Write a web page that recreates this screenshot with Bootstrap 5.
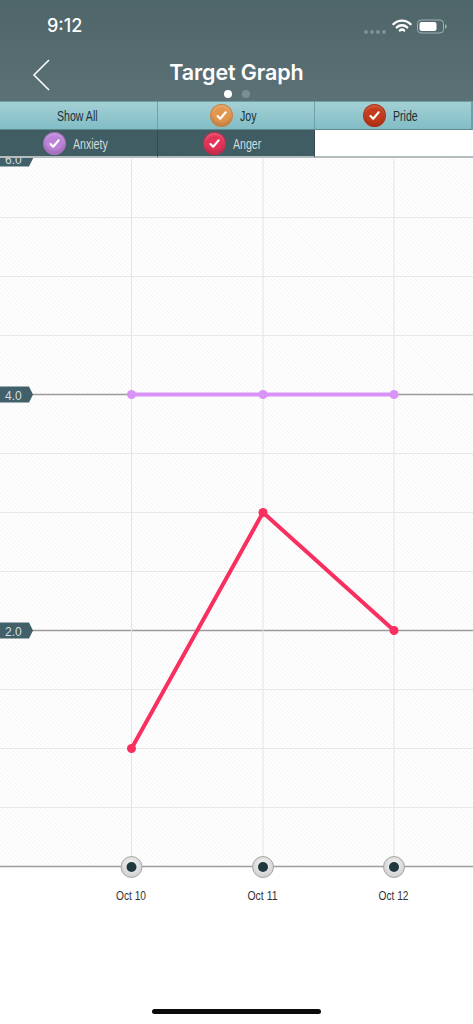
<!DOCTYPE html>
<html lang="en">
<head>
<meta charset="UTF-8">
<meta name="viewport" content="width=device-width, initial-scale=1.0">
<title>Target Graph</title>
<link href="https://cdn.jsdelivr.net/npm/bootstrap@5.3.3/dist/css/bootstrap.min.css" rel="stylesheet">
<style>
  html, body { height: 100%; }
  body { background: #fff; font-family: "Liberation Sans", Arial, sans-serif; width: 473px; height: 1024px; overflow: hidden; }
  .top-head { height: 101px; background: linear-gradient(#4e656a, #5b7175); color: #fff; }
  .status-row { height: 52px; padding: 15px 25px 0 47px; }
  .clock { font-family: Inter, "Liberation Sans", sans-serif; font-size: 18px; font-weight: 500; line-height: 22px; }
  .signal-dots { gap: 2px; margin: 11px 6px 0 0; }
  .signal-dots i { width: 4px; height: 4px; border-radius: 50%; background: #7d9196; }
  .status-icons { margin-top: 3px; }
  .wifi-icon { margin-right: 5px; }
  .title-row { height: 49px; }
  .page-title { font-family: Inter, "Liberation Sans", sans-serif; font-size: 21.5px; font-weight: 600; line-height: 1; margin: 0; padding-top: 10px; letter-spacing: -.1px; }
  .back-arrow { left: 32px; top: 59px; }
  .dots { left: 223.5px; top: 90px; gap: 10.5px; }
  .dots i { width: 8px; height: 8px; border-radius: 50%; background: #7b8f93; }
  .dots i.on { background: #fff; }
  .filter-row { display: grid; grid-template-columns: 158px 157px 158px; }
  .filter-row.one { height: 29px; }
  .filter-row.two { height: 28px; }
  .filter-cell { display: flex; align-items: center; gap: 7px; font-size: 14.5px; font-weight: 400; }
  .lbl { display: inline-block; transform: scaleX(.73); transform-origin: left center; white-space: nowrap; padding-top: 3px; }
  .one .filter-cell { background: linear-gradient(#a3d0d5, #82bdc6); color: #1f2f33; border: 1px solid #6f9fa6; border-left: 0; border-bottom-color: #5f888e; }
  .one .filter-cell:last-child { border-right: 2px solid #6f9fa6; }
  .two .filter-cell { background: #3f5d63; color: #d2dcde; border-right: 1px solid #35494e; border-bottom: 2px solid #b5bcbd; }
  .two .filter-cell.blank { background: #fff; border-right: 0; }
  .cell-all { padding-left: 57px; }
  .cell-joy { padding-left: 52px; }
  .cell-pride { padding-left: 48px; }
  .cell-anx { padding-left: 43px; }
  .cell-ang { padding-left: 45px; }
  .check-dot { width: 23px; height: 23px; flex: none; border-radius: 50%; display: flex; align-items: center; justify-content: center; border: 1px solid rgba(0, 0, 0, .12); box-shadow: inset 0 -3px 3px rgba(0, 0, 0, .14), inset 0 2px 2px rgba(255, 255, 255, .18); }
  .c-joy { background: #e2974f; }
  .c-pride { background: #c43a1a; }
  .c-anx { background: #bd83d8; }
  .c-ang { background: #e23458; }
  .chart-wrap { height: 760px; overflow: hidden; }
  .chart-wrap svg { display: block; }
  .axis-txt { font-family: "Liberation Sans", Arial, sans-serif; font-size: 12px; fill: #d5dfe0; }
  .date-txt { font-family: "Liberation Sans", Arial, sans-serif; font-size: 13px; fill: #333; }
  .home-bar { left: 152px; top: 1009px; width: 169px; height: 5px; border-radius: 3px; background: #0b0b0b; }
</style>
</head>
<body class="position-relative">

<div class="top-head position-relative">
  <div class="status-row d-flex align-items-start justify-content-between">
    <span class="clock">9:12</span>
    <div class="status-icons d-flex align-items-center">
      <div class="signal-dots d-flex"><i></i><i></i><i></i><i></i></div>
      <svg width="20" height="16" viewBox="0 0 20 16" class="wifi-icon" fill="none" stroke="#fff" stroke-linecap="round">
        <path d="M1.5 6.2a12 12 0 0 1 17 0" stroke-width="2.4"/>
        <path d="M4.8 9.4a7.4 7.4 0 0 1 10.4 0" stroke-width="2.4"/>
        <path d="M8 12.4a3 3 0 0 1 4 0" stroke-width="2.6"/>
      </svg>
      <svg width="31" height="15" viewBox="0 0 31 15">
        <rect x=".5" y="1" width="26" height="13" rx="3.5" fill="none" stroke="#9fb0b3"/>
        <rect x="2.5" y="3" width="17" height="9" rx="2" fill="#fff"/>
        <rect x="28" y="5.500" width="1.500" height="4" rx=".7" fill="#9fb0b3"/>
      </svg>
    </div>
  </div>
  <div class="title-row text-center">
    <h1 class="page-title">Target Graph</h1>
  </div>
  <svg class="back-arrow position-absolute" width="20" height="32" viewBox="0 0 20 32" fill="none" stroke="#fff" stroke-width="1.5">
    <path d="M17 1 2 16l15 15"/>
  </svg>
  <div class="dots position-absolute d-flex"><i class="on"></i><i></i></div>
</div>

<div class="filter-row one">
  <div class="filter-cell cell-all"><span class="lbl">Show All</span></div>
  <div class="filter-cell cell-joy">
    <span class="check-dot c-joy"><svg width="13" height="11" viewBox="0 0 13 11" fill="none" stroke="#fff" stroke-width="2.1" stroke-linecap="round" stroke-linejoin="round"><path d="m2.500 6 2.700 2.700 5.500-6.400"/></svg></span><span class="lbl">Joy</span>
  </div>
  <div class="filter-cell cell-pride">
    <span class="check-dot c-pride"><svg width="13" height="11" viewBox="0 0 13 11" fill="none" stroke="#fff" stroke-width="2.1" stroke-linecap="round" stroke-linejoin="round"><path d="m2.500 6 2.700 2.700 5.500-6.400"/></svg></span><span class="lbl">Pride</span>
  </div>
</div>
<div class="filter-row two">
  <div class="filter-cell cell-anx">
    <span class="check-dot c-anx"><svg width="13" height="11" viewBox="0 0 13 11" fill="none" stroke="#fff" stroke-width="2.1" stroke-linecap="round" stroke-linejoin="round"><path d="m2.500 6 2.700 2.700 5.500-6.400"/></svg></span><span class="lbl">Anxiety</span>
  </div>
  <div class="filter-cell cell-ang">
    <span class="check-dot c-ang"><svg width="13" height="11" viewBox="0 0 13 11" fill="none" stroke="#fff" stroke-width="2.1" stroke-linecap="round" stroke-linejoin="round"><path d="m2.500 6 2.700 2.700 5.500-6.400"/></svg></span><span class="lbl">Anger</span>
  </div>
  <div class="filter-cell blank"></div>
</div>

<div class="chart-wrap">
  <svg id="chart" width="473" height="760" viewBox="0 157.500 473 760">
    <defs>
      <pattern id="hatch" width="3" height="3" patternUnits="userSpaceOnUse" patternTransform="rotate(-45)">
        <rect width="3" height="3" fill="#fff"/>
        <rect width="1" height="3" fill="#f6f6f6"/>
      </pattern>
      <radialGradient id="knob" cx=".5" cy=".4" r=".6">
        <stop offset="0" stop-color="#f9f9f9"/>
        <stop offset="1" stop-color="#cdcdcd"/>
      </radialGradient>
    </defs>
    <rect x="0" y="157.500" width="473" height="708.500" fill="url(#hatch)"/>
    <g id="gridlines"></g>
    <polyline points="131,394 263,394 394,394" fill="none" stroke="#d993f7" stroke-width="4"/>
    <polyline points="131.500,748 263,512 394,630" fill="none" stroke="#f9305f" stroke-width="4" stroke-linejoin="round"/>
    <g fill="#d993f7"><circle cx="131.500" cy="394" r="4.500"/><circle cx="263" cy="394" r="4.500"/><circle cx="394" cy="394" r="4.500"/></g>
    <g fill="#f9305f"><circle cx="131.500" cy="748" r="4.500"/><circle cx="263" cy="512" r="4.500"/><circle cx="394" cy="630" r="4.500"/></g>
    <g id="axis-tags"></g>
    <g id="x-axis"></g>
  </svg>
</div>

<div class="home-bar position-absolute"></div>

<script src="https://cdn.jsdelivr.net/npm/bootstrap@5.3.3/dist/js/bootstrap.bundle.min.js"></script>
<script>
  const ns = "http://www.w3.org/2000/svg";
  function add(parent, name, attrs, text) {
    const el = document.createElementNS(ns, name);
    for (const k in attrs) el.setAttribute(k, attrs[k]);
    if (text) el.textContent = text;
    document.getElementById(parent).appendChild(el);
  }

  const xs = [131.5, 263, 394];

  // horizontal lines, every 59px. 2.0 and 4.0 are the dark ones
  for (let i = 1; i <= 12; i++) {
    const y = 158 + i * 59;
    const dark = i === 4 || i === 8 || i === 12;
    add("gridlines", "line", { x1: 0, x2: 473, y1: y, y2: y, stroke: dark ? "#9c9c9c" : "#e8e8e8", "stroke-width": dark ? 1.5 : 1 });
  }
  xs.forEach(x => add("gridlines", "line", { x1: x, x2: x, y1: 158, y2: 866, stroke: "#e3e3e3", "stroke-width": 1 }));

  [[158, "6.0"], [394, "4.0"], [630, "2.0"]].forEach(([y, label]) => {
    add("axis-tags", "polygon", { points: `0,${y - 8} 29,${y - 8} 33,${y} 29,${y + 8} 0,${y + 8}`, fill: "#41606a" });
    add("axis-tags", "text", { x: 5, y: y + 5, class: "axis-txt" }, label);
  });

  ["Oct 10", "Oct 11", "Oct 12"].forEach((label, i) => {
    const x = xs[i];
    add("x-axis", "circle", { cx: x, cy: 866.5, r: 10.5, fill: "url(#knob)", stroke: "#a8a8a8" });
    add("x-axis", "circle", { cx: x, cy: 866.5, r: 5, fill: "#21383e" });
    add("x-axis", "text", { x: x - .5, y: 899, "text-anchor": "middle", class: "date-txt", textLength: 30, lengthAdjust: "spacingAndGlyphs" }, label);
  });
</script>
</body>
</html>
